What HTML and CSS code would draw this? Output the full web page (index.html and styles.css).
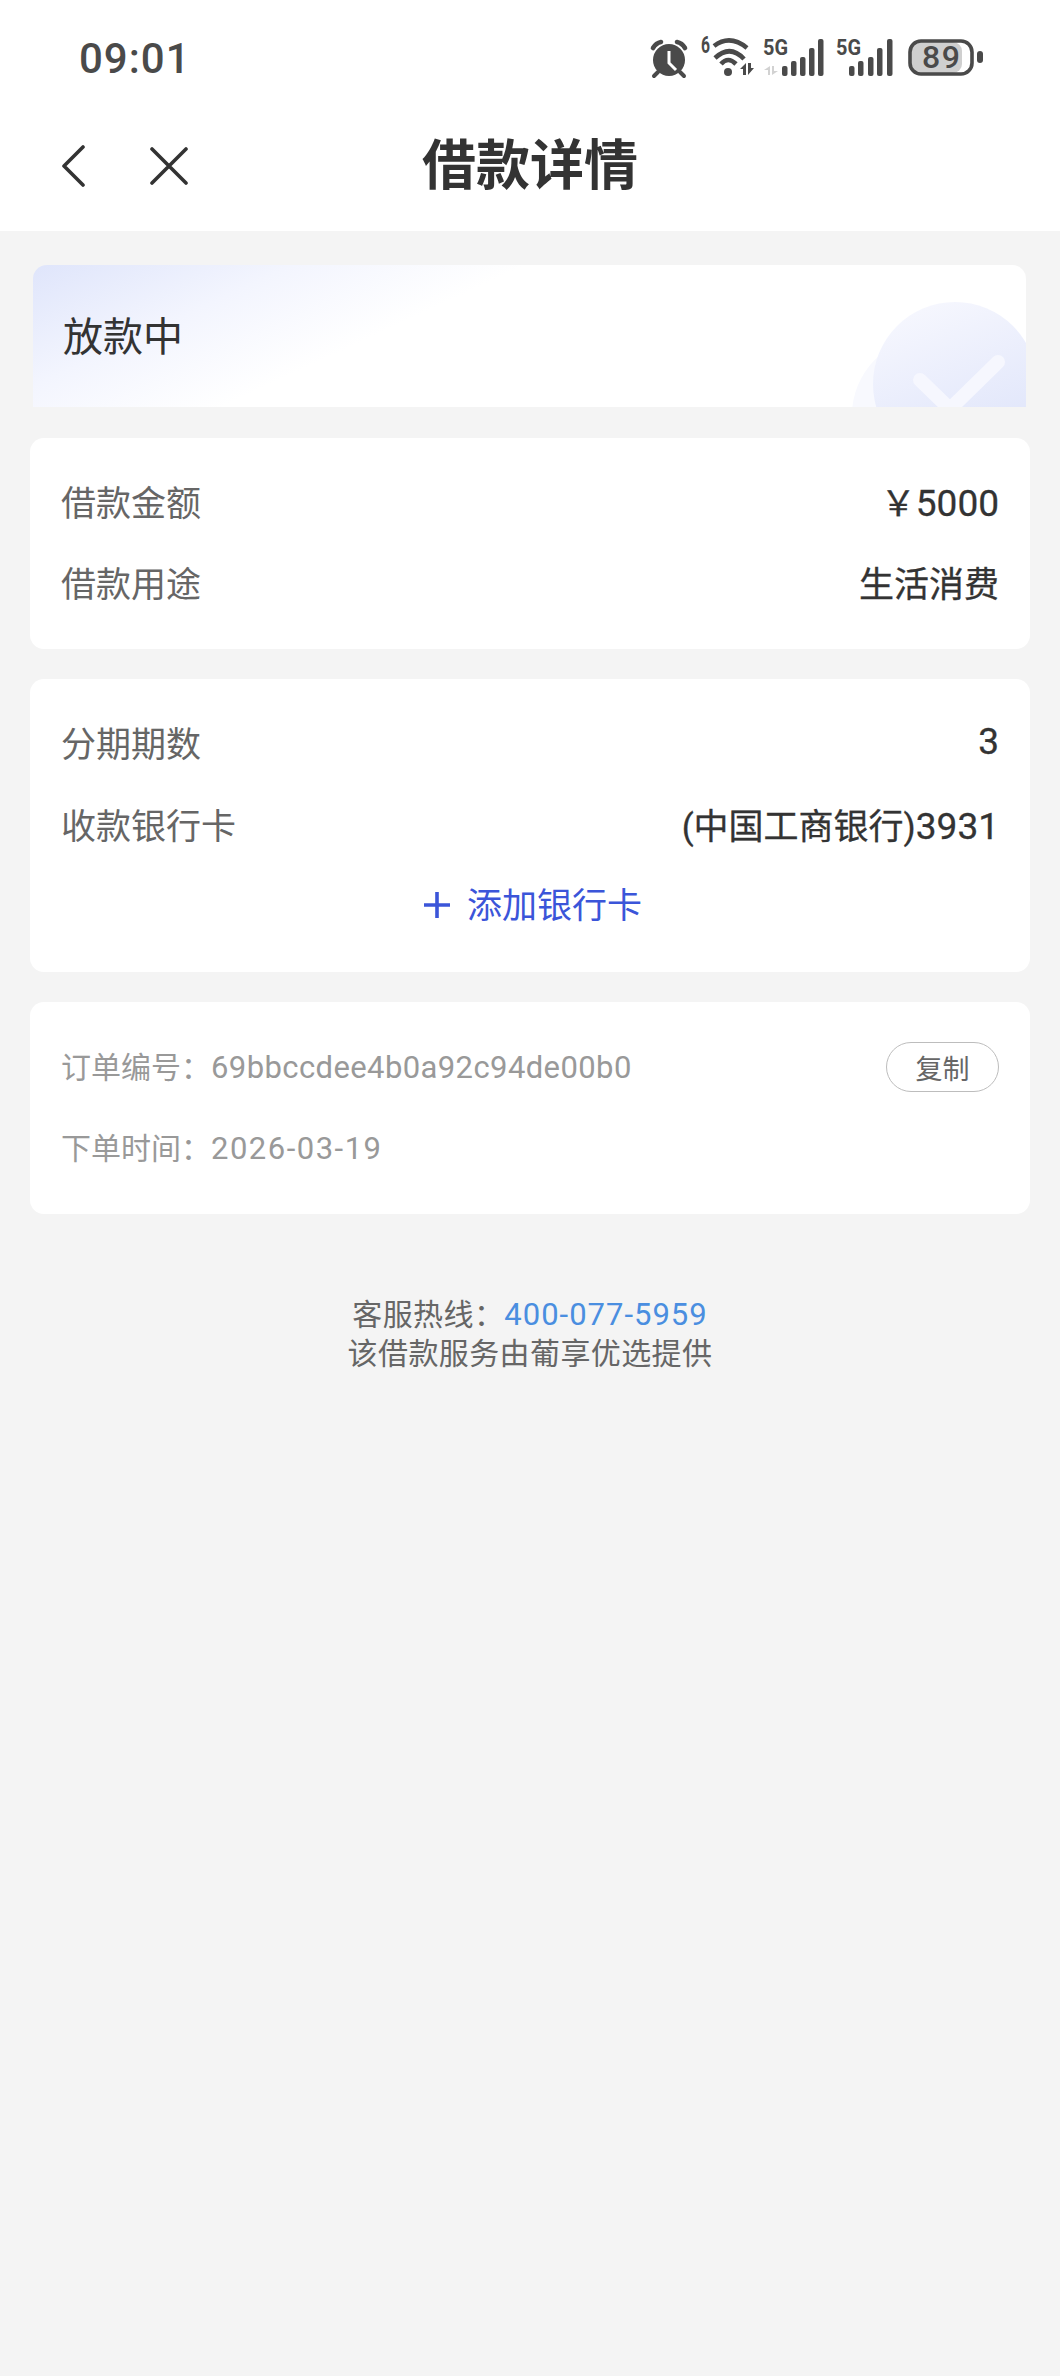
FILE: index.html
```html
<!DOCTYPE html>
<html lang="zh-CN">

<head>
  <meta charset="UTF-8">
  <meta name="viewport" content="width=device-width, initial-scale=1.0">
  <title>借款详情</title>
  <link rel="stylesheet" href="styles.css">
</head>

<body>

  <header class="top">
    <div class="status">
      <span class="time">09:01</span>
      <div class="status-icons">
        <svg class="ic-alarm" width="38" height="42" viewBox="0 0 38 42">
          <circle cx="19" cy="24" r="16" fill="#4a4a4a" />
          <path d="M3 12 Q6 7 11 6 M35 12 Q32 7 27 6" fill="none" stroke="#4a4a4a" stroke-width="4.6" stroke-linecap="round" />
          <path d="M8 36 L4 40 M30 36 L34 40" stroke="#4a4a4a" stroke-width="4" stroke-linecap="round" />
          <path d="M19 15 V27 L26 34" fill="none" stroke="#fff" stroke-width="3" />
        </svg>
        <svg class="ic-wifi" width="56" height="42" viewBox="0 0 56 42">
          <text x="1" y="17" textLength="9" lengthAdjust="spacingAndGlyphs" class="ic-text six">6</text>
          <path d="M14 10 Q30 -2 47 12" fill="none" stroke="#4a4a4a" stroke-width="4.6" />
          <path d="M15 22 Q30 8 44 23" fill="none" stroke="#4a4a4a" stroke-width="4.6" />
          <path d="M21 28 Q28 20 36 28" fill="none" stroke="#4a4a4a" stroke-width="4.6" />
          <circle cx="28" cy="36" r="4" fill="#4a4a4a" />
          <path d="M46 27 V39 H43 V33 H40 Z M48 27 H51 V32 H54 L48 39 Z" fill="#4a4a4a" />
        </svg>
        <svg class="ic-signal" width="62" height="42" viewBox="0 0 62 42">
          <text x="1" y="19" textLength="25" lengthAdjust="spacingAndGlyphs" class="ic-text big">5G</text>
          <path d="M8 30 V39 H6 V34 H2 Z M10 30 H12 V35 H16 L10 39 Z" fill="#d2d2d2" />
          <rect x="20" y="30" width="5.5" height="10" rx="2" fill="#4a4a4a" />
          <rect x="29" y="25" width="5.5" height="15" rx="2" fill="#4a4a4a" />
          <rect x="38" y="21" width="5.5" height="19" rx="2" fill="#4a4a4a" />
          <rect x="47" y="12" width="5.5" height="28" rx="2" fill="#4a4a4a" />
          <rect x="56" y="3" width="5.5" height="37" rx="2" fill="#4a4a4a" />
        </svg>
        <svg class="ic-signal2" width="58" height="42" viewBox="0 0 58 42">
          <text x="1" y="19" textLength="25" lengthAdjust="spacingAndGlyphs" class="ic-text big">5G</text>
          <rect x="14" y="30" width="5.5" height="10" rx="2" fill="#4a4a4a" />
          <rect x="23" y="25" width="5.5" height="15" rx="2" fill="#4a4a4a" />
          <rect x="33" y="21" width="5.5" height="19" rx="2" fill="#4a4a4a" />
          <rect x="42" y="12" width="5.5" height="28" rx="2" fill="#4a4a4a" />
          <rect x="52" y="3" width="5.5" height="37" rx="2" fill="#4a4a4a" />
        </svg>
        <svg class="ic-battery" width="78" height="42" viewBox="0 0 78 42">
          <rect x="5" y="6" width="51" height="31" rx="9" fill="#cfcfcf" />
          <rect x="4" y="5" width="62" height="33" rx="11" fill="none" stroke="#4a4a4a" stroke-width="3.6" />
          <rect x="71" y="15" width="6" height="12" rx="3" fill="#4a4a4a" />
          <text x="16" y="32" textLength="38" class="ic-text batt">89</text>
        </svg>
      </div>
    </div>
    <nav class="nav">
      <div class="nav-left">
        <svg width="24" height="42" viewBox="0 0 24 42">
          <path d="M22 2 L3 21 L22 40" fill="none" stroke="#333" stroke-width="3.6" stroke-linecap="round" stroke-linejoin="round" />
        </svg>
        <svg width="38" height="38" viewBox="0 0 38 38">
          <path d="M2 2 L36 36 M36 2 L2 36" fill="none" stroke="#333" stroke-width="3.6" stroke-linecap="round" />
        </svg>
      </div>
      <h1 class="title">借款详情</h1>
      <div></div>
    </nav>
  </header>

  <main class="main">
    <section class="hero">
      <span class="hero-text">放款中</span>
      <svg class="hero-mark" width="200" height="142" viewBox="0 0 200 142">
        <defs>
          <linearGradient id="markFill" x1="0.3" y1="0" x2="0.7" y2="1">
            <stop offset="0" stop-color="#f6f7fe" />
            <stop offset="1" stop-color="#dde3fa" />
          </linearGradient>
        </defs>
        <circle cx="104" cy="150" r="78" fill="#f8f9fe" />
        <circle cx="129" cy="119" r="82" fill="url(#markFill)" />
        <path d="M94 115 L124 144 L172 97" fill="none" stroke="#f6f7fe" stroke-width="14" stroke-linecap="round" stroke-linejoin="round" />
      </svg>
    </section>

    <section class="card card-loan">
      <div class="row"><span class="label">借款金额</span><span class="value">￥<span class="digits">5000</span></span></div>
      <div class="row"><span class="label">借款用途</span><span class="value">生活消费</span></div>
    </section>

    <section class="card card-bank">
      <div class="row"><span class="label">分期期数</span><span class="value"><span class="digits">3</span></span></div>
      <div class="row"><span class="label">收款银行卡</span><span class="value">(中国工商银行)<span class="digits">3931</span></span></div>
      <div class="add-card">
        <svg width="26" height="26" viewBox="0 0 26 26">
          <path d="M13 0 V26 M0 13 H26" stroke="#3b55d9" stroke-width="3.6" />
        </svg>
        <span>添加银行卡</span>
      </div>
    </section>

    <section class="card card-order">
      <div class="order-row">
        <span>订单编号：<span class="order-no">69bbccdee4b0a92c94de00b0</span></span>
        <button class="copy">复制</button>
      </div>
      <div class="order-row">
        <span>下单时间：<span class="order-date">2026-03-19</span></span>
      </div>
    </section>

    <footer class="foot">
      <p>客服热线：<span class="phone">400-077-5959</span></p>
      <p>该借款服务由葡享优选提供</p>
    </footer>
  </main>

</body>

</html>
```

FILE: styles.css
```css
* {
  box-sizing: border-box;
}

html,
body {
  height: 100%;
}

body {
  margin: 0;
  background: #f4f4f4;
  color: #333;
  font-family: Roboto, "Noto Sans CJK SC", sans-serif;
}

.top {
  background: #fff;
}

.status {
  height: 116px;
  padding: 0 76px 0 79px;
  display: flex;
  align-items: center;
  justify-content: space-between;
}

.time {
  color: #4a4a4a;
  font-size: 42px;
  font-weight: 500;
  letter-spacing: 1px;
}

.status-icons {
  padding-bottom: 2px;
  display: flex;
  align-items: center;
}

.status-icons svg {
  display: block;
  overflow: visible;
}

.ic-alarm {
  margin-right: 12px;
}

.ic-wifi {
  margin-right: 6px;
}

.ic-signal {
  margin-right: 11px;
}

.ic-signal2 {
  margin-right: 13px;
}

.ic-text {
  fill: #4a4a4a;
  font-family: Roboto, sans-serif;
  font-weight: 700;
}

.ic-text.big {
  font-size: 22px;
}

.ic-text.six {
  font-size: 23px;
}

.ic-text.batt {
  font-size: 32px;
  font-weight: 500;
}

.nav {
  height: 115px;
  padding-bottom: 15px;
  display: grid;
  grid-template-columns: 1fr auto 1fr;
  align-items: center;
}

.nav-left {
  padding-left: 61px;
  display: flex;
  align-items: center;
  gap: 65px;
}

.title {
  margin: 0;
  padding-top: 2px;
  color: #333;
  font-size: 54px;
  font-weight: 700;
  line-height: 60px;
}

.main {
  padding: 34px 30px 0;
}

.hero {
  position: relative;
  height: 142px;
  margin: 0 4px 31px 3px;
  padding: 0 0 5px 30px;
  display: flex;
  align-items: center;
  overflow: hidden;
  border-radius: 14px 14px 0 0;
  background: linear-gradient(155deg, #dfe5fb 0%, #f3f5fe 20%, #fff 38%);
}

.hero-text {
  font-size: 40px;
  color: #333;
}

.hero-mark {
  position: absolute;
  right: 0;
  bottom: 0;
}

.card {
  margin-bottom: 30px;
  padding: 0 31px;
  background: #fff;
  border-radius: 14px;
}

.card-loan {
  padding-top: 22px;
  padding-bottom: 27px;
}

.card-bank {
  padding-top: 21px;
  padding-bottom: 32px;
}

.row {
  height: 81px;
  display: flex;
  align-items: center;
  justify-content: space-between;
  font-size: 35px;
}

.card-bank .row {
  height: 82px;
}

.label {
  color: #666;
}

.value {
  color: #333;
  -webkit-text-stroke: 0.3px #333;
}

.digits {
  font-size: 37px;
}

.add-card {
  height: 76px;
  padding-left: 6px;
  display: flex;
  align-items: center;
  justify-content: center;
  gap: 17px;
  color: #3b55d9;
  font-size: 35px;
}

.add-card svg {
  margin-top: 6px;
}

.card-order {
  height: 212px;
  padding-top: 22px;
  color: #999;
  font-size: 30px;
}

.order-row {
  height: 81px;
  display: flex;
  align-items: center;
  justify-content: space-between;
}

.order-no {
  font-size: 31px;
  letter-spacing: 0.4px;
}

.order-date {
  font-size: 31px;
  letter-spacing: 1.5px;
}

.copy {
  width: 113px;
  height: 50px;
  margin-top: 5px;
  padding: 0;
  background: #fff;
  border: 1px solid #bdbdbd;
  border-radius: 25px;
  color: #666;
  font-family: inherit;
  font-size: 27px;
}

.foot {
  margin-top: 81px;
  text-align: center;
  color: #666;
  font-size: 30px;
  letter-spacing: 0.4px;
  line-height: 39px;
}

.foot p {
  margin: 0;
}

.phone {
  color: #4a8ee0;
  font-size: 31px;
  letter-spacing: 1px;
}
```
